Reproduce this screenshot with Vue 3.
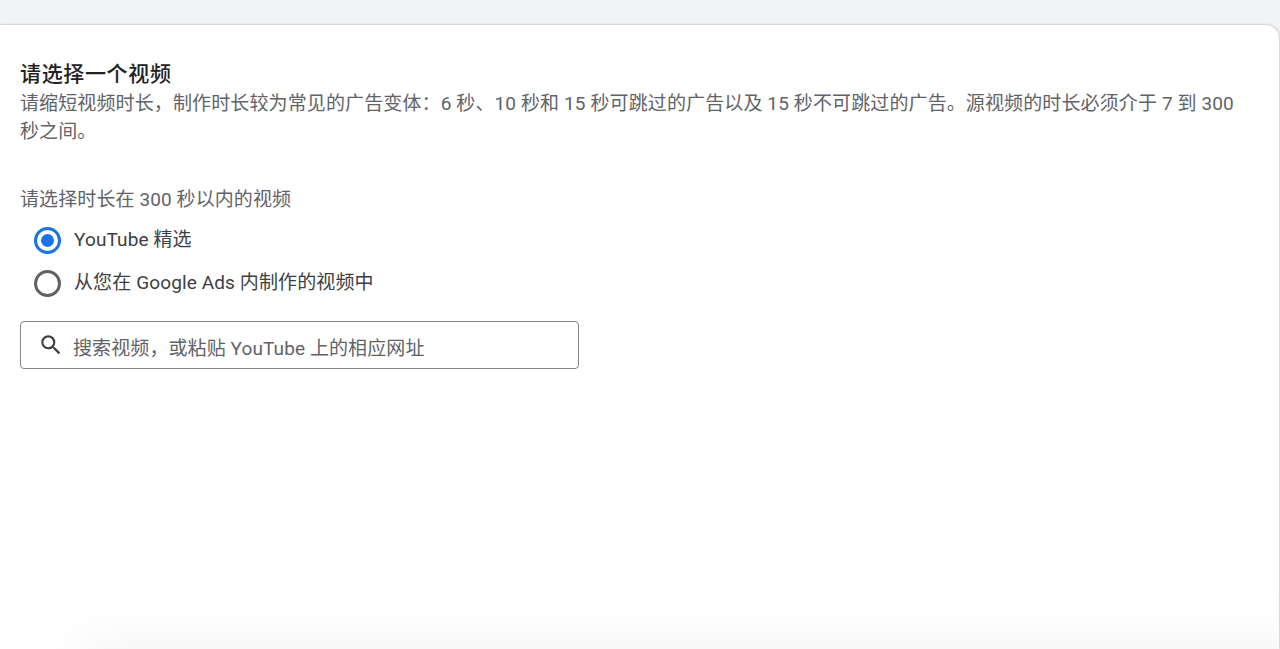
<template>
  <div class="page">
    <section class="card">
      <h2 class="title">请选择一个视频</h2>
      <p class="desc">
        请缩短视频时长，制作时长较为常见的广告变体：6 秒、10 秒和 15 秒可跳过的广告以及 15 秒不可跳过的广告。源视频的时长必须介于 7 到 300 秒之间。
      </p>

      <p class="hint">请选择时长在 300 秒以内的视频</p>

      <div class="radios">
        <label v-for="item in options" :key="item.value" class="radio-row">
          <span class="radio" :class="{ checked: selected === item.value }"></span>
          <span class="radio-label">{{ item.label }}</span>
        </label>
      </div>

      <div class="search">
        <svg class="search-icon" viewBox="0 0 24 24" width="26" height="26" aria-hidden="true">
          <path
            d="M15.5 14h-.79l-.28-.27A6.47 6.47 0 0 0 16 9.5 6.5 6.5 0 1 0 9.5 16c1.61 0 3.09-.59 4.23-1.57l.27.28v.79l5 4.99L20.49 19l-4.99-5zm-6 0C7.01 14 5 11.99 5 9.5S7.01 5 9.5 5 14 7.01 14 9.5 11.99 14 9.5 14z"
          />
        </svg>
        <span class="placeholder">搜索视频，或粘贴 YouTube 上的相应网址</span>
      </div>

      <div class="bottom-fade"></div>
    </section>
  </div>
</template>

<script setup>
import { ref } from "vue";

const selected = ref("youtube");

const options = [
  { value: "youtube", label: "YouTube 精选" },
  { value: "ads", label: "从您在 Google Ads 内制作的视频中" },
];
</script>

<style>
html,
body {
  margin: 0;
  background: #f1f3f4;
  overflow: hidden;
}
</style>

<style scoped>
.page {
  height: 649px;
  padding: 25px 1px 0 0;
  box-sizing: border-box;
  background: #f1f3f4;
  font-family: Roboto, "Noto Sans CJK SC", sans-serif;
}

.card {
  position: relative;
  height: 624px;
  box-sizing: border-box;
  padding: 36px 20px 0;
  background: #ffffff;
  border-radius: 0 13px 0 0;
  box-shadow:
    0 -1px 2px rgba(60, 64, 67, 0.14),
    1px 0 2px rgba(60, 64, 67, 0.14);
  overflow: hidden;
}

.title {
  margin: 0;
  color: #202124;
  font-size: 21px;
  line-height: 26px;
  font-weight: 500;
  letter-spacing: 0.65px;
}

.desc {
  width: 1225px;
  margin: 3px 0 0;
  color: #5f6368;
  font-size: 19px;
  line-height: 28px;
  letter-spacing: 0.12px;
}

.hint {
  margin: 40px 0 0;
  color: #5f6368;
  font-size: 19px;
  line-height: 28px;
  letter-spacing: 0.1px;
}

.radios {
  display: grid;
  gap: 15px;
  margin: 12px 0 0 13.5px;
}

.radio-row {
  display: flex;
  align-items: center;
  gap: 13.5px;
  height: 28px;
  color: #3c4043;
  font-size: 19px;
  line-height: 28px;
  letter-spacing: 0.12px;
}

.radio {
  position: relative;
  width: 27px;
  height: 27px;
  box-sizing: border-box;
  border: 3px solid #5f6368;
  border-radius: 50%;
}

.radio.checked {
  border-color: #1a73e8;
}

.radio.checked::after {
  content: "";
  position: absolute;
  inset: 4px;
  border-radius: 50%;
  background: #1a73e8;
}

.search {
  display: flex;
  align-items: center;
  gap: 9px;
  width: 559px;
  height: 48px;
  box-sizing: border-box;
  margin-top: 24px;
  padding-left: 17px;
  border: 1px solid #80868b;
  border-radius: 4px;
}

.search-icon {
  fill: #3c4043;
  flex: none;
}

.placeholder {
  padding-top: 8px;
  color: #5f6368;
  font-size: 19px;
  line-height: 28px;
  letter-spacing: 0.1px;
}

.bottom-fade {
  position: absolute;
  left: 80px;
  right: -60px;
  bottom: -34px;
  height: 40px;
  background: #f3f3f3;
  filter: blur(22px);
}
</style>
